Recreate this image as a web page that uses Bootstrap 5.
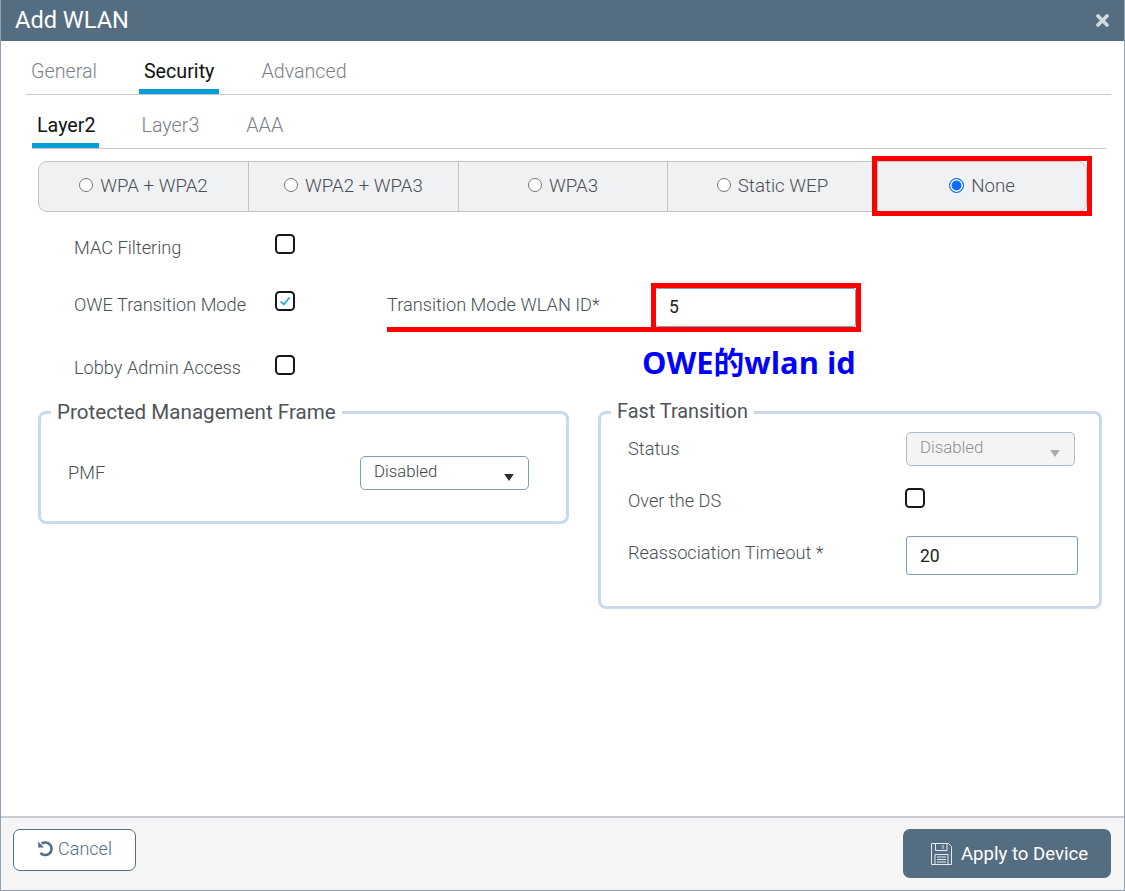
<!DOCTYPE html>
<html lang="en">
<head>
    <meta charset="UTF-8">
    <title>Add WLAN</title>
    <link href="https://cdn.jsdelivr.net/npm/bootstrap@5.3.0/dist/css/bootstrap.min.css" rel="stylesheet">
    <style>
        body { font-family: Roboto, "Liberation Sans", sans-serif; font-weight: 300; font-size: 18.2px; color: #4a4f54; background: #fff; }
        .wlan-modal { width: 1125px; height: 891px; border: 1px solid #8da3b5; border-top: 0; position: relative; overflow: hidden; }
        .wlan-head { height: 41px; background: #546d80; color: #fff; margin: 0 -1px; padding: 0 16px 0 15px; font-size: 23.6px; font-weight: 400; }
        .wlan-body { height: 776px; }

        /* Tabs */
        .wlan-tabs { margin: 0 13px 0 25px; height: 54px; border-bottom: 1px solid #c6c8ca; gap: 37px; flex-wrap: nowrap; }
        .wlan-subtabs { margin: 0 18px 0 31px; }
        .wlan-subtabs li:first-child { margin-right: 1px; }
        .wlan-tab { display: block; height: 53px; padding: 17px 5px 0; color: #7c8187; text-decoration: none; font-size: 19.7px; line-height: 28px; }
        .wlan-tab.on { color: #111; font-weight: 400; border-bottom: 5px solid #049fd9; }
        .wlan-subtabs .wlan-tab.on { padding-right: 3px; }

        /* Security type strip */
        .sec-strip { margin: 12px 0 0 37px; width: 1049px; height: 51px; border: 1px solid #c0c2c4; border-radius: 9px; background: #f0f1f3; overflow: hidden; }
        .sec-cell { width: 210px; border-right: 1px solid #c0c2c4; margin: 0; gap: 7px; font-size: 18.7px; }
        .sec-cell:nth-child(3) { width: 209px; }
        .sec-cell:last-child { border-right: 0; width: auto; flex-grow: 1; }
        .sec-cell .form-check-input { width: 14px; height: 14px; margin: -2px 0 0; border: 1px solid #767676; background-color: #fff; flex-shrink: 0; }
        .sec-cell .form-check-input:checked { width: 15px; height: 15px; border: 1.5px solid #0d6efd; background-color: #0d6efd; background-image: none; box-shadow: inset 0 0 0 1.5px #fff; }

        /* Form rows */
        .opt-rows { margin: 7px 0 0 73px; }
        .opt-row { height: 57px; }
        .opt-row.last-opt { height: 70px; margin-bottom: -2px; }
        .opt-name { width: 201px; flex-shrink: 0; }
        .id-name { width: 268px; margin-left: 92px; flex-shrink: 0; }
        .wlan-check { width: 20px; height: 20px; margin: 0 0 6px; border: 2px solid #15181a; border-radius: 4px; background-color: #fff; flex-shrink: 0; }
        .wlan-check:checked { background-color: #fff; border-color: #15181a; background-size: 14px; background-image: url("data:image/svg+xml,%3csvg xmlns='http://www.w3.org/2000/svg' viewBox='0 0 14 14'%3e%3cpath fill='none' stroke='%23049fd9' stroke-width='1.3' d='M2.5 7.5 5.8 10.5 11.5 3.5'/%3e%3c/svg%3e"); }
        .wlan-field { height: 39px; border: 1px solid #7f9db5; border-radius: 3px; padding: 0 13px; margin-top: 6px; font-size: 17.5px; font-weight: 400; color: #222; box-shadow: none; }
        .id-field { width: 201px; }
        .ft-field { width: 172px; }
        .ft-check { margin-left: -1px; }

        /* Group boxes */
        .group-wrap { margin: 0 0 0 37px; gap: 29px; align-items: flex-start; }
        .wlan-group { border: 3px solid #c9d9ea; border-radius: 8px; min-width: 0; margin: 0; }
        .wlan-group legend { float: none; width: auto; margin: 0 0 0 -17px; padding: 0 6px 2px; font-size: 19.9px; line-height: 22px; font-weight: 400; color: #4f5357; }
        .group-pmf legend { font-size: 20.6px; }
        .group-pmf { width: 531px; height: 123px; padding: 0 37px 0 27px; }
        .group-ft { width: 504px; height: 208px; padding: 0 21px 0 27px; }
        .group-row { height: 52px; }
        .group-row.pmf-row { margin-top: 22px; }
        .group-row.first-ft { margin-top: -2px; }
        .ft-name { width: 278px; flex-shrink: 0; }
        .wlan-select { width: 169px; height: 34px; border: 1px solid #7f9db5; border-radius: 5px; padding: 0 13px 2px; font-size: 16.8px; font-weight: 300; color: #3e4347; background-color: #fff; background-size: 10px 7px; background-position: right 14px top 17px; box-shadow: none;
            background-image: url("data:image/svg+xml,%3csvg xmlns='http://www.w3.org/2000/svg' viewBox='0 0 11 8'%3e%3cpath fill='%232b2f33' d='M0 0H11L5.5 8Z'/%3e%3c/svg%3e"); }
        .wlan-select:disabled { background-color: #f4f4f4; border-color: #a9bdcc; color: #8c9094;
            background-image: url("data:image/svg+xml,%3csvg xmlns='http://www.w3.org/2000/svg' viewBox='0 0 11 8'%3e%3cpath fill='%23a9adb1' d='M0 0H11L5.5 8Z'/%3e%3c/svg%3e"); }

        /* Footer */
        .wlan-foot { height: 74px; border-top: 2px solid #c6cdd3; background: #f5f5f5; padding: 11px 13px 0 12px; }
        .btn-cancel { width: 123px; height: 42px; background: #fff; border: 1px solid #546d80; border-radius: 7px; color: #546d80; font-size: 18px; font-weight: 300; padding: 0 0 3px; gap: 4px; }
        .btn-apply { width: 208px; height: 49px; background: #546d80; border: 0; border-radius: 7px; color: #fff; font-size: 18.6px; font-weight: 400; padding: 3px 0 0 4px; gap: 8px; }
        .btn-apply svg { margin-top: -3px; }

        /* Red annotations drawn over the form */
        .mark-box { position: absolute; border: 5px solid #f00; }
        .mark-none { left: 871px; top: 156px; width: 220px; height: 60px; }
        .mark-id { left: 650px; top: 283px; width: 210px; height: 49px; }
        .mark-line { position: absolute; left: 386px; top: 327px; width: 266px; height: 5px; background: #f00; }
        .mark-note { position: absolute; left: 641px; top: 342px; font-family: "Open Sans", "Noto Sans CJK SC", sans-serif; font-size: 30.8px; line-height: 40px; font-weight: 700; color: #00f; white-space: nowrap; }
    </style>
</head>
<body>

<div class="wlan-modal d-flex flex-column">
    <div class="wlan-head d-flex align-items-center justify-content-between">
        <span>Add WLAN</span>
        <svg width="13" height="13" viewBox="0 0 13 13"><path d="M2 2 11 11M11 2 2 11" stroke="#d3dade" stroke-width="3.6" stroke-linecap="round"/></svg>
    </div>

    <div class="wlan-body">
        <ul class="nav wlan-tabs">
            <li class="nav-item"><a class="wlan-tab" href="#">General</a></li>
            <li class="nav-item"><a class="wlan-tab on" href="#">Security</a></li>
            <li class="nav-item"><a class="wlan-tab" href="#">Advanced</a></li>
        </ul>
        <ul class="nav wlan-tabs wlan-subtabs">
            <li class="nav-item"><a class="wlan-tab on" href="#">Layer2</a></li>
            <li class="nav-item"><a class="wlan-tab" href="#">Layer3</a></li>
            <li class="nav-item"><a class="wlan-tab" href="#">AAA</a></li>
        </ul>

        <div class="sec-strip d-flex">
            <label class="sec-cell d-flex align-items-center justify-content-center"><input class="form-check-input" type="radio" name="sec">WPA + WPA2</label>
            <label class="sec-cell d-flex align-items-center justify-content-center"><input class="form-check-input" type="radio" name="sec">WPA2 + WPA3</label>
            <label class="sec-cell d-flex align-items-center justify-content-center"><input class="form-check-input" type="radio" name="sec">WPA3</label>
            <label class="sec-cell d-flex align-items-center justify-content-center"><input class="form-check-input" type="radio" name="sec">Static WEP</label>
            <label class="sec-cell d-flex align-items-center justify-content-center"><input class="form-check-input" type="radio" name="sec" checked>None</label>
        </div>

        <div class="opt-rows">
            <div class="opt-row d-flex align-items-center"><span class="opt-name">MAC Filtering</span><input class="form-check-input wlan-check" type="checkbox"></div>
            <div class="opt-row d-flex align-items-center">
                <span class="opt-name">OWE Transition Mode</span><input class="form-check-input wlan-check" type="checkbox" checked>
                <span class="id-name">Transition Mode WLAN ID*</span>
                <input class="form-control wlan-field id-field" type="text" value="5">
            </div>
            <div class="opt-row last-opt d-flex align-items-center"><span class="opt-name">Lobby Admin Access</span><input class="form-check-input wlan-check" type="checkbox"></div>
        </div>

        <div class="group-wrap d-flex">
            <fieldset class="wlan-group group-pmf">
                <legend>Protected Management Frame</legend>
                <div class="group-row pmf-row d-flex align-items-center justify-content-between">
                    <span>PMF</span>
                    <select class="form-select wlan-select"><option>Disabled</option></select>
                </div>
            </fieldset>
            <fieldset class="wlan-group group-ft">
                <legend>Fast Transition</legend>
                <div class="group-row first-ft d-flex align-items-center">
                    <span class="ft-name">Status</span>
                    <select class="form-select wlan-select" disabled><option>Disabled</option></select>
                </div>
                <div class="group-row d-flex align-items-center">
                    <span class="ft-name">Over the DS</span>
                    <input class="form-check-input wlan-check ft-check" type="checkbox">
                </div>
                <div class="group-row d-flex align-items-center">
                    <span class="ft-name">Reassociation Timeout *</span>
                    <input class="form-control wlan-field ft-field" type="text" value="20">
                </div>
            </fieldset>
        </div>
    </div>

    <div class="wlan-foot d-flex justify-content-between align-items-start">
        <button class="btn btn-cancel d-flex align-items-center justify-content-center" type="button">
            <svg width="17" height="17" viewBox="0 0 17 17"><path d="M4.6 3.6A6.3 6.3 0 1 1 3.4 12.8" fill="none" stroke="#546d80" stroke-width="2.6"/><path d="M1.2 1.6V7.4H7Z" fill="#546d80"/></svg>
            Cancel
        </button>
        <button class="btn btn-apply d-flex align-items-center justify-content-center" type="button">
            <svg width="23" height="24" viewBox="0 0 23 24" fill="none" stroke="#e4e9ed" stroke-width="1"><path d="M1.5 1.5H18.5L21.5 4.5V22.5H1.5Z"/><path d="M5.5 1.5V8.5H17V1.5M13 3V7"/><path d="M5 12.5H18V22.5H5ZM7 15H16M7 17.5H16M7 20H16"/></svg>
            Apply to Device
        </button>
    </div>

    <div class="mark-box mark-none"></div>
    <div class="mark-box mark-id"></div>
    <div class="mark-line"></div>
    <div class="mark-note">OWE的wlan id</div>
</div>

<script src="https://cdn.jsdelivr.net/npm/bootstrap@5.3.0/dist/js/bootstrap.bundle.min.js"></script>
</body>
</html>
